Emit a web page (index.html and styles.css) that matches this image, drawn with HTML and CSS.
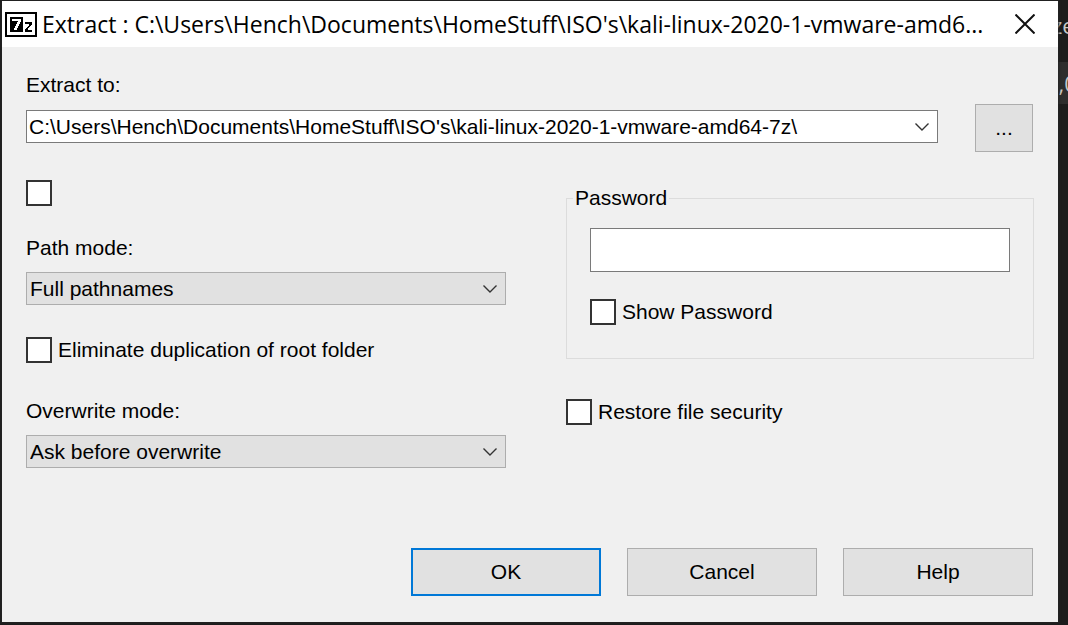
FILE: index.html
```html
<!DOCTYPE html>
<html lang="en">
<head>
<meta charset="utf-8">
<title>Extract</title>
<link rel="stylesheet" href="styles.css">
</head>
<body>
<div class="backdrop" aria-hidden="true">
  <span class="backdrop-head">ze</span>
  <span class="backdrop-row">2,0</span>
</div>
<main class="dialog">
  <header class="titlebar">
    <svg class="app-icon" viewBox="0 0 32 25" shape-rendering="crispEdges" aria-hidden="true">
      <path fill="#000" d="M0 0h32v25H0z"/>
      <path fill="#fff" d="M2 2h28v21H2z"/>
      <path fill="#000" d="M5 5h13v15H5z"/>
      <path fill="#fff" d="M7 7h9v3h-1v2h-1v2h-1v2h-1v2H9v-2h1v-2h1v-2h1v-2h1v-1H7z"/>
      <path fill="#000" d="M20 10h7v3h-1v1h-1v1h-1v1h-1v2h4v2h-7v-3h1v-1h1v-1h1v-1h1v-2h-4z"/>
    </svg>
    <h1 class="title">Extract : C:\Users\Hench\Documents\HomeStuff\ISO's\kali-linux-2020-1-vmware-amd6...</h1>
    <button class="close" type="button" aria-label="Close">
      <svg class="close-icon" viewBox="0 0 20 20" aria-hidden="true"><path d="M.5.5l19 19M19.5.5l-19 19"/></svg>
    </button>
  </header>
  <form class="content">
    <label class="label" for="path">Extract to:</label>
    <div class="path-row">
      <div class="combo">
        <input class="combo-input" id="path" type="text" spellcheck="false" value="C:\Users\Hench\Documents\HomeStuff\ISO's\kali-linux-2020-1-vmware-amd64-7z\">
        <button class="combo-button" type="button" aria-label="Show recent paths">
          <svg class="chevron" viewBox="0 0 14 8" aria-hidden="true"><path d="M.5.5L7 7 13.5.5"/></svg>
        </button>
      </div>
      <button class="button browse" type="button">...</button>
    </div>
    <div class="columns">
      <div class="column">
        <input class="box" type="checkbox" aria-label="Extract to subfolder">
        <label class="label path-label" for="path-mode">Path mode:</label>
        <div class="select-wrap">
          <select class="select" id="path-mode"><option>Full pathnames</option></select>
          <svg class="chevron select-chevron" viewBox="0 0 14 8" aria-hidden="true"><path d="M.5.5L7 7 13.5.5"/></svg>
        </div>
        <label class="check root-check"><input class="box" type="checkbox">Eliminate duplication of root folder</label>
        <label class="label overwrite-label" for="overwrite-mode">Overwrite mode:</label>
        <div class="select-wrap">
          <select class="select" id="overwrite-mode"><option>Ask before overwrite</option></select>
          <svg class="chevron select-chevron" viewBox="0 0 14 8" aria-hidden="true"><path d="M.5.5L7 7 13.5.5"/></svg>
        </div>
      </div>
      <div class="column options">
        <fieldset class="group">
          <legend class="legend">Password</legend>
          <input class="password" type="password" aria-label="Password">
          <label class="check"><input class="box" type="checkbox">Show Password</label>
        </fieldset>
        <label class="check"><input class="box" type="checkbox">Restore file security</label>
      </div>
    </div>
    <footer class="actions">
      <button class="button primary" type="button">OK</button>
      <button class="button" type="button">Cancel</button>
      <button class="button" type="button">Help</button>
    </footer>
  </form>
</main>
</body>
</html>
```
FILE: styles.css
```css
* {
  box-sizing: border-box;
}

body {
  margin: 0;
  min-height: 100vh;
  padding: 1px 10px 3px 2px;
  display: flex;
  background: #1c1c1c;
  color: #000;
  font: 21px/26px "Liberation Sans", Arial, sans-serif;
  overflow: hidden;
}

.backdrop {
  position: absolute;
  top: 0;
  right: 0;
  width: 24px;
  height: 104px;
  overflow: hidden;
  color: #c8c8c8;
  font: 22px/42px "Open Sans", "Noto Sans", sans-serif;
}

.backdrop-head,
.backdrop-row {
  position: absolute;
  left: 8px;
}

.backdrop-head {
  top: 4px;
}

.backdrop-row {
  top: 62px;
  left: 0;
  width: 100%;
  padding-left: 2px;
  background: #2d2d2d;
}

.dialog {
  position: relative;
  flex: 1;
  min-width: 0;
  display: flex;
  flex-direction: column;
  background: #f0f0f0;
  box-shadow: 0 0 2px 1px #262626;
}

.titlebar {
  display: flex;
  align-items: center;
  height: 46px;
  padding: 0 23px 0 3px;
  background: #fff;
}

.app-icon {
  flex: none;
  width: 32px;
  height: 25px;
}

.title {
  flex: 1;
  min-width: 0;
  margin: 0 0 0 5px;
  overflow: hidden;
  white-space: nowrap;
  font: 23px/46px "Open Sans", "Noto Sans", sans-serif;
}

.close {
  flex: none;
  display: flex;
  padding: 0;
  border: 0;
  background: none;
}

.close-icon {
  width: 20px;
  height: 20px;
  fill: none;
  stroke: #111;
  stroke-width: 2;
}

.content {
  flex: 1;
  display: flex;
  flex-direction: column;
  padding: 25px 24px 26px;
}

.label {
  display: block;
}

.path-row {
  display: flex;
  align-items: flex-start;
  gap: 37px;
  margin-top: 6px;
  padding-right: 1px;
}

.combo {
  flex: 1;
  display: flex;
  height: 33px;
  margin-top: 6px;
  border: 1px solid #7a7a7a;
  background: #fff;
}

.combo-input {
  flex: 1;
  min-width: 0;
  padding: 0 2px;
  border: 0;
  background: none;
  color: inherit;
  font: inherit;
  outline: 0;
}

.combo-button {
  display: flex;
  align-items: center;
  padding: 0 8px;
  border: 0;
  background: none;
}

.chevron {
  width: 14px;
  height: 8px;
  fill: none;
  stroke: #333;
  stroke-width: 1.4;
}

.columns {
  display: grid;
  grid-template-columns: 480fr 468fr;
  gap: 60px;
  margin-top: 28px;
}

.column {
  display: flex;
  flex-direction: column;
}

.box {
  appearance: none;
  flex: none;
  width: 26px;
  height: 26px;
  margin: 0;
  border: 2px solid #333;
  background: #fff;
}

.box:checked {
  background: #333;
  box-shadow: inset 0 0 0 4px #fff;
}

.check {
  display: flex;
  align-items: center;
  gap: 6px;
}

.path-label {
  margin-top: 29px;
}

.root-check {
  margin-top: 32px;
}

.overwrite-label {
  margin-top: 35px;
}

.select-wrap {
  position: relative;
  margin-top: 11px;
}

.select {
  appearance: none;
  display: block;
  width: 100%;
  height: 33px;
  padding: 0 32px 0 3px;
  border: 1px solid #adadad;
  border-radius: 0;
  background: #e1e1e1;
  color: inherit;
  font: inherit;
}

.select-chevron {
  position: absolute;
  top: 13px;
  right: 9px;
  pointer-events: none;
}

.options {
  gap: 40px;
  padding-top: 5px;
}

.group {
  min-width: 0;
  margin: 0;
  padding: 17px 23px 33px;
  border: 1px solid #dcdcdc;
}

.legend {
  margin-left: -17px;
  padding: 0 2px;
}

.password {
  display: block;
  width: 100%;
  height: 44px;
  margin-bottom: 27px;
  padding: 0 8px;
  border: 1px solid #7a7a7a;
  font: inherit;
}

.actions {
  display: flex;
  justify-content: flex-end;
  gap: 26px;
  margin-top: auto;
  padding-right: 1px;
}

.button {
  width: 190px;
  height: 48px;
  padding: 0;
  border: 1px solid #adadad;
  background: #e1e1e1;
  color: inherit;
  font: inherit;
}

.browse {
  width: 58px;
}

.primary {
  border: 2px solid #0078d7;
}
```
